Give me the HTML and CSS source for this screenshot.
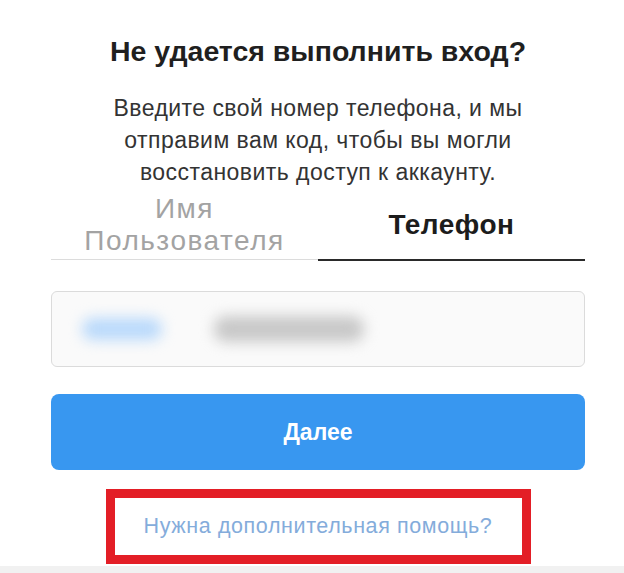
FILE: index.html
```html
<!DOCTYPE html>
<html lang="ru">
<head>
<meta charset="utf-8">
<title>Не удается выполнить вход?</title>
<link rel="stylesheet" href="styles.css">
</head>
<body>
<main class="screen">
  <h1 class="title">Не удается выполнить вход?</h1>
  <p class="lead">Введите свой номер телефона, и мы отправим вам код, чтобы вы могли восстановить доступ к аккаунту.</p>
  <div class="tabs">
    <div class="tab tab-inactive">Имя<br>Пользователя</div>
    <div class="tab tab-active">Телефон</div>
  </div>
  <div class="field">
    <span class="blur blur-code"></span>
    <span class="blur blur-number"></span>
  </div>
  <button class="next" type="button">Далее</button>
  <div class="highlight">
    <a class="help" href="#">Нужна дополнительная помощь?</a>
  </div>
</main>
<div class="bottom-bar"></div>
</body>
</html>
```
FILE: styles.css
```css
html, body {
  margin: 0;
  padding: 0;
  background: #ffffff;
}

body {
  font-family: "Liberation Sans", Arial, sans-serif;
  color: #262626;
  overflow: hidden;
}

.screen {
  width: 534px;
  padding: 34px 39px 0 51px;
  display: flex;
  flex-direction: column;
}

.title {
  margin: 0;
  font-size: 28.5px;
  line-height: 34px;
  font-weight: 700;
  text-align: center;
  color: #1f1f1f;
}

.lead {
  margin: 24px auto 0;
  max-width: 440px;
  font-size: 23px;
  line-height: 32px;
  letter-spacing: 0.45px;
  text-align: center;
  color: #333333;
}

.tabs {
  display: flex;
  align-items: flex-start;
}

.tab {
  flex: 1;
  height: 68px;
  padding-top: 3px;
  display: flex;
  align-items: center;
  justify-content: center;
  text-align: center;
}

.tab-inactive {
  font-size: 28px;
  line-height: 32px;
  letter-spacing: 1.5px;
  color: #a3a3a3;
  border-bottom: 1px solid #dcdcdc;
}

.tab-active {
  font-size: 28px;
  line-height: 32px;
  font-weight: 700;
  letter-spacing: 0.5px;
  color: #1c1c1c;
  border-bottom: 2px solid #2a2a2a;
}

.field {
  margin-top: 30px;
  height: 76px;
  box-sizing: border-box;
  border: 1px solid #dbdbdb;
  border-radius: 6px;
  background: #fafafa;
  display: flex;
  align-items: center;
  padding-left: 30px;
  gap: 52px;
}

.blur {
  display: block;
  filter: blur(7px);
  border-radius: 12px;
}

.blur-code {
  width: 80px;
  height: 22px;
  background: #b9d9fb;
}

.blur-number {
  width: 150px;
  height: 26px;
  background: #c8c8c8;
}

.next {
  margin-top: 27px;
  height: 76px;
  border: 0;
  border-radius: 8px;
  background: #3897f0;
  color: #ffffff;
  font-family: "Liberation Sans", Arial, sans-serif;
  font-size: 23px;
  font-weight: 700;
  padding: 0;
}

.highlight {
  margin: 19px auto 0;
  width: 425px;
  height: 75px;
  box-sizing: border-box;
  border: 9px solid #e31e26;
  display: flex;
  align-items: center;
  justify-content: center;
}

.help {
  font-size: 21.5px;
  letter-spacing: 0.6px;
  color: #84acdb;
  text-decoration: none;
}

.bottom-bar {
  margin-top: 2px;
  height: 20px;
  background: #f1f1f1;
}
```
